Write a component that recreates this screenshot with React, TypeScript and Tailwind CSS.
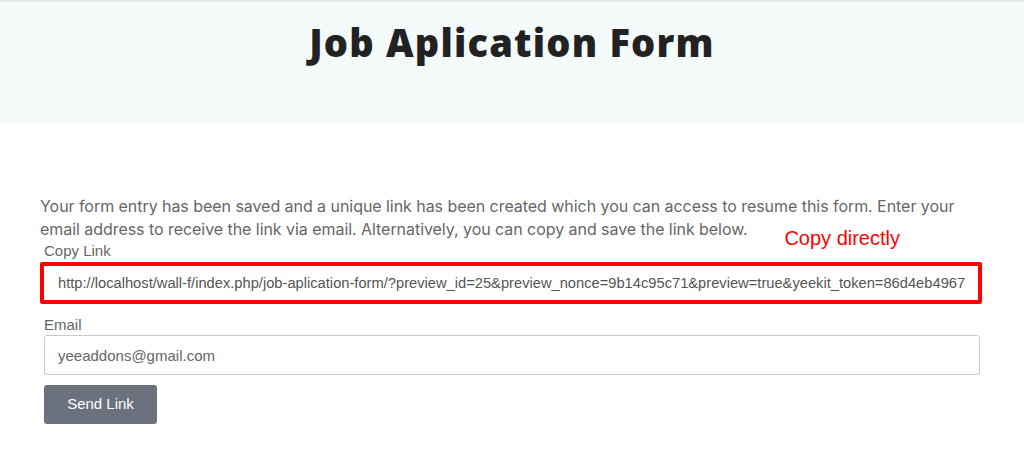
import React from 'react';

const link =
  'http://localhost/wall-f/index.php/job-aplication-form/?preview_id=25&preview_nonce=9b14c95c71&preview=true&yeekit_token=86d4eb4967a1c2f0';

const App: React.FC = () => {
  return (
    <div className="min-h-[456px] bg-white font-['Inter',sans-serif]">
      {/* Header */}
      <div className="h-[123px] border-t-2 border-[#e3ebeb] bg-[#f4f9f9] pt-[16px] text-center">
        <h1 className="font-['Open_Sans',sans-serif] text-[38px] font-extrabold leading-[48px] tracking-[1.2px] text-[#222]">
          Job Aplication Form
        </h1>
      </div>

      {/* Body */}
      <div className="px-[40px] pt-[72px]">
        <p className="w-[940px] text-[16px] leading-[23px] tracking-[-0.05px] text-[#666]">
          Your form entry has been saved and a unique link has been created which you can access to resume this form. Enter your email address to receive the link via email. Alternatively, you can copy and save the link below.
        </p>

        <div className="relative mt-[1px]">
          <label className="block pl-[4px] font-['Liberation_Sans',sans-serif] text-[15px] leading-[18px] text-[#666]">
            Copy Link
          </label>
          <span className="absolute right-[84px] top-[-16px] font-['Liberation_Sans',sans-serif] text-[20px] leading-[24px] text-[#ff0000]">
            Copy directly
          </span>
          <div className="mt-[2px] w-[942px] rounded-[2px] border-[4px] border-[#ff0000] bg-white pl-[14px] pr-[12px]">
            <div className="h-[34px] overflow-hidden whitespace-nowrap font-['Liberation_Sans',sans-serif] text-[14.7px] leading-[34px] text-[#555]">
              {link}
            </div>
          </div>
        </div>

        <div className="mt-[12px] pl-[4px]">
          <label className="block font-['Liberation_Sans',sans-serif] text-[15px] leading-[18px] text-[#666]">
            Email
          </label>
          <input
            readOnly
            value="yeeaddons@gmail.com"
            className="mt-[1px] h-[40px] w-[936px] rounded-[3px] border border-[#c8c8cc] px-[13px] font-['Liberation_Sans',sans-serif] text-[15px] text-[#666] outline-none"
          />
          <button className="mt-[10px] h-[39px] w-[113px] rounded-[3px] bg-[#6b727d] font-['Liberation_Sans',sans-serif] text-[15px] text-white">
            Send Link
          </button>
        </div>
      </div>
    </div>
  );
};

export default App;
